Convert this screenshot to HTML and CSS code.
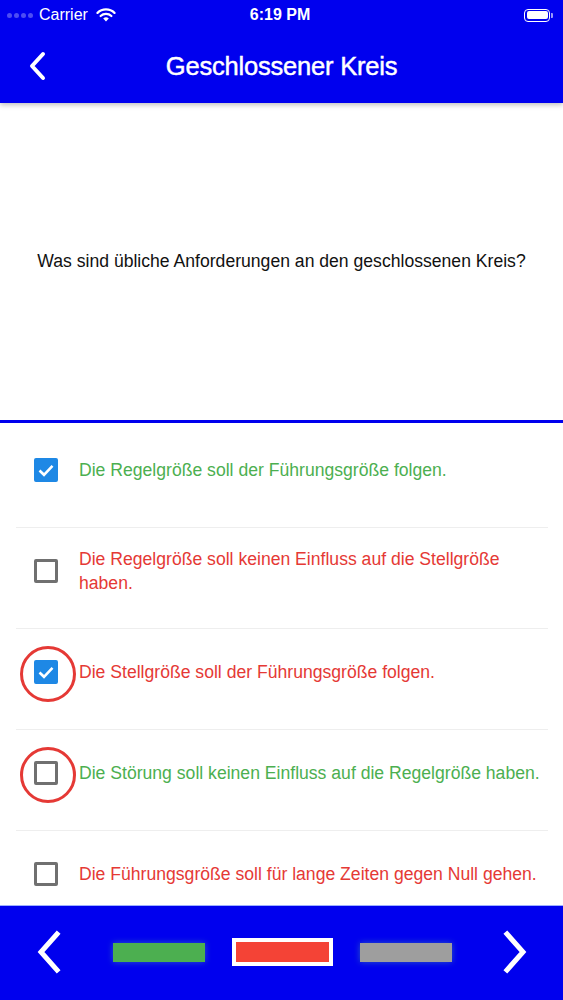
FILE: index.html
```html
<!DOCTYPE html>
<html>
<head>
<meta charset="utf-8">
<link rel="stylesheet" href="styles.css">
</head>
<body>
<div class="app">
  <header class="top">
    <div class="status">
      <div class="status-left">
        <span class="dots"><i></i><i></i><i></i><i></i></span>
        <span class="carrier">Carrier</span>
        <svg class="wifi" width="20" height="14" viewBox="0 0 20 14">
          <path d="M10 13.5 L7.2 10.6 A4 4 0 0 1 12.8 10.6 Z" fill="#fff"/>
          <path d="M4.6 8 A7.8 7.8 0 0 1 15.4 8" stroke="#fff" stroke-width="2.2" fill="none" stroke-linecap="round"/>
          <path d="M1.5 4.9 A12.2 12.2 0 0 1 18.5 4.9" stroke="#fff" stroke-width="2.2" fill="none" stroke-linecap="round"/>
        </svg>
      </div>
      <div class="time">6:19 PM</div>
      <div class="status-right">
        <span class="battery"><span class="battery-fill"></span></span><span class="battery-cap"></span>
      </div>
    </div>
    <nav class="navbar">
      <svg class="back" width="18" height="30" viewBox="0 0 18 30">
        <path d="M14 3 L3 15 L14 27" stroke="#fff" stroke-width="4" fill="none" stroke-linecap="round" stroke-linejoin="round"/>
      </svg>
      <h1 class="title">Geschlossener Kreis</h1>
    </nav>
  </header>

  <section class="question">
    <p>Was sind übliche Anforderungen an den geschlossenen Kreis?</p>
  </section>

  <ul class="answers">
    <li class="row">
      <span class="box checked"><svg width="18" height="18" viewBox="0 0 18 18"><path d="M2.5 9.5 L7 13.8 L15.5 4.8" stroke="#fff" stroke-width="2.6" fill="none"/></svg></span>
      <span class="text green">Die Regelgröße soll der Führungsgröße folgen.</span>
    </li>
    <li class="row">
      <span class="box"></span>
      <span class="text red">Die Regelgröße soll keinen Einfluss auf die Stellgröße haben.</span>
    </li>
    <li class="row">
      <span class="box checked marked"><svg width="18" height="18" viewBox="0 0 18 18"><path d="M2.5 9.5 L7 13.8 L15.5 4.8" stroke="#fff" stroke-width="2.6" fill="none"/></svg></span>
      <span class="text red">Die Stellgröße soll der Führungsgröße folgen.</span>
    </li>
    <li class="row">
      <span class="box marked"></span>
      <span class="text green">Die Störung soll keinen Einfluss auf die Regelgröße haben.</span>
    </li>
    <li class="row">
      <span class="box"></span>
      <span class="text red">Die Führungsgröße soll für lange Zeiten gegen Null gehen.</span>
    </li>
  </ul>

  <footer class="bottom">
    <svg class="arrow" width="28" height="44" viewBox="0 0 28 44">
      <path d="M22 4 L6 22 L22 40" stroke="#fff" stroke-width="5" fill="none" stroke-linecap="square"/>
    </svg>
    <div class="progress">
      <span class="seg seg-green"></span>
      <span class="seg seg-red current"></span>
      <span class="seg seg-grey"></span>
    </div>
    <svg class="arrow" width="28" height="44" viewBox="0 0 28 44">
      <path d="M6 4 L22 22 L6 40" stroke="#fff" stroke-width="5" fill="none" stroke-linecap="square"/>
    </svg>
  </footer>
</div>
</body>
</html>
```

FILE: styles.css
```css
* { box-sizing: border-box; }
html, body { margin: 0; padding: 0; }
body {
  font-family: "Liberation Sans", Arial, sans-serif;
  background: #fff;
  width: 563px;
  height: 1000px;
  overflow: hidden;
}
.app {
  display: flex;
  flex-direction: column;
  height: 1000px;
}
.top {
  background: #0000ee;
  color: #fff;
  box-shadow: 0 2px 5px rgba(0,0,0,0.25);
  position: relative;
  z-index: 2;
}
.status {
  height: 30px;
  display: grid;
  grid-template-columns: 1fr auto 1fr;
  align-items: center;
  padding: 0 10px 0 7px;
}
.status-left {
  display: flex;
  align-items: center;
  gap: 6px;
}
.dots { display: flex; gap: 2px; }
.dots i {
  width: 5px; height: 5px; border-radius: 50%;
  background: rgba(255,255,255,0.3);
}
.carrier { font-size: 16px; }
.wifi { margin-left: 2px; }
.time { font-size: 16px; font-weight: bold; }
.status-right { display: flex; justify-content: flex-end; align-items: center; }
.battery {
  width: 26px; height: 13px;
  border: 1.5px solid #fff;
  border-radius: 4px;
  padding: 1.5px;
  display: flex;
}
.battery-fill { flex: 1; background: #fff; border-radius: 2px; }
.battery-cap {
  width: 2px; height: 5px; background: rgba(255,255,255,0.6);
  border-radius: 0 1px 1px 0; margin-left: 1px;
}
.navbar {
  height: 73px;
  display: flex;
  align-items: center;
  justify-content: center;
  position: relative;
}
.back { position: absolute; left: 29px; top: 21px; }
.title {
  margin: 0 0 1px;
  font-size: 25.5px;
  font-weight: normal;
  letter-spacing: -0.2px;
  -webkit-text-stroke: 0.45px #fff;
}
.question {
  height: 320px;
  display: flex;
  align-items: center;
  justify-content: center;
  border-bottom: 3px solid #0000ee;
}
.question p {
  margin: 0;
  font-size: 17.6px;
  color: #111;
  text-align: center;
}
.answers {
  list-style: none;
  margin: 0;
  padding: 4px 15px 0 16px;
  flex: 1;
  overflow: hidden;
}
.row {
  height: 101px;
  display: flex;
  align-items: center;
  gap: 21px;
  padding: 0 0 14px 18px;
  border-bottom: 1px solid #eeeeee;
}
.box {
  position: relative;
  flex: none;
  width: 24px;
  height: 24px;
  border: 3px solid #707070;
  border-radius: 2px;
  display: flex;
  align-items: center;
  justify-content: center;
}
.box.checked {
  background: #1e88e5;
  border-color: #1e88e5;
}
.box.marked::after {
  content: "";
  position: absolute;
  left: -17px;
  top: -17px;
  width: 50px;
  height: 50px;
  border: 3.5px solid #e53935;
  border-radius: 50%;
}
.text { font-size: 17.6px; line-height: 24px; }
.green { color: #4caf50; }
.red { color: #e53935; }
.bottom {
  height: 95px;
  flex: none;
  background: #0000ee;
  border-top: 1px solid #9db0ff;
  display: flex;
  align-items: center;
  justify-content: space-between;
  padding: 0 34px 2px 35px;
}
.progress {
  display: flex;
  align-items: center;
  gap: 27px;
}
.seg {
  width: 92px;
  height: 19px;
  box-shadow: 0 0 6px rgba(120,255,120,0.35);
}
.seg-green { background: #4caf50; }
.seg-red { background: #f44336; width: 101px; height: 28px; border: 4px solid #fff; box-shadow: none; }
.seg-grey { background: #9e9e9e; }
```
